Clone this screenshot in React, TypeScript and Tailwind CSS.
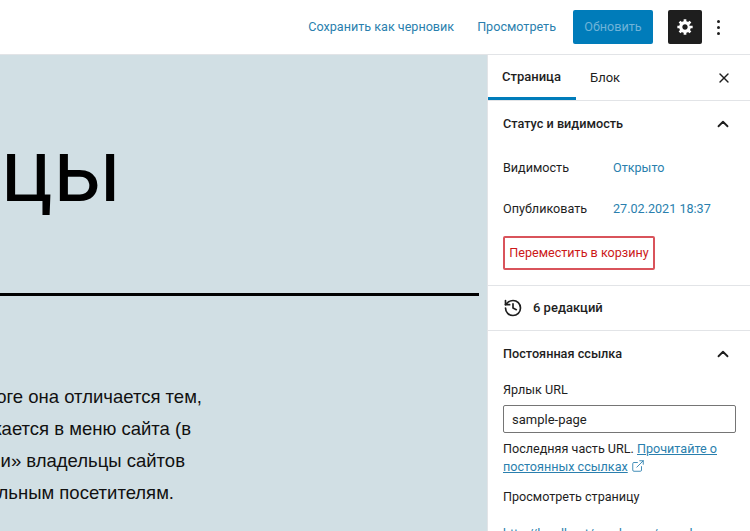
import { ChevronUp, ExternalLink, History, X } from 'lucide-react'

function SectionHeader({ title }: { title: string }) {
  return (
    <div className="flex items-center justify-between">
      <span className="text-[12.7px] leading-[18px] font-medium text-[#1e1e1e]">{title}</span>
      <ChevronUp size={18} strokeWidth={2.4} className="text-[#1e1e1e] mr-[3px]" />
    </div>
  )
}

export default function App() {
  return (
    <div className="w-[750px] h-[531px] overflow-hidden bg-white flex flex-col font-['Roboto','Liberation_Sans',sans-serif]">
      <header className="h-[55px] shrink-0 flex items-center justify-end border-b border-[#e2e4e7] pr-[30px]">
        <a className="text-[12.6px] text-[#2a7fae] mr-[23px]">Сохранить как черновик</a>
        <a className="text-[12.6px] text-[#2a7fae] mr-[17px]">Просмотреть</a>
        <button className="w-[80px] h-[34px] rounded-[2px] bg-[#007cba] text-[12.6px] text-[#6fb3d8] mr-[15px]">Обновить</button>
        <button className="w-[34px] h-[34px] rounded-[2px] bg-[#1e1e1e] flex items-center justify-center mr-[15px]">
          <svg width="18" height="18" viewBox="0 0 20 20" fill="#fff">
            <path d="M18 12h-2.18c-.17.7-.44 1.35-.81 1.93l1.54 1.54-2.1 2.1-1.54-1.54c-.58.36-1.23.63-1.91.79V19H8v-2.18c-.68-.16-1.33-.43-1.91-.79l-1.54 1.54-2.12-2.12 1.54-1.54c-.36-.58-.63-1.23-.79-1.91H1V9.03h2.17c.16-.7.44-1.35.8-1.94L2.43 5.55l2.1-2.1 1.54 1.54c.58-.37 1.24-.64 1.93-.81V2h3v2.18c.68.16 1.33.43 1.91.79l1.54-1.54 2.12 2.12-1.54 1.54c-.36.59-.64 1.24-.8 1.94H18V12zm-8.5 1.5c1.66 0 3-1.34 3-3s-1.34-3-3-3-3 1.34-3 3 1.34 3 3 3z" transform="translate(.5 -.5)" />
          </svg>
        </button>
        <span className="flex flex-col gap-[3px]">
          <span className="w-[3px] h-[3px] rounded-full bg-[#1e1e1e]" />
          <span className="w-[3px] h-[3px] rounded-full bg-[#1e1e1e]" />
          <span className="w-[3px] h-[3px] rounded-full bg-[#1e1e1e]" />
        </span>
      </header>

      <div className="flex flex-1 min-h-0">
        <main className="w-[487px] shrink-0 bg-[#d1dfe4] overflow-hidden font-['Liberation_Sans',sans-serif] text-black">
          {/* the page content is scrolled sideways, so lines are cut at the left edge */}
          <div className="w-[122px] h-[104px] mt-[64px] flex justify-end">
            <h1 className="whitespace-nowrap text-[89px] leading-[104px] font-['Roboto',sans-serif]">Заголовок страницы</h1>
          </div>
          <div className="w-[479px] h-[3px] bg-black mt-[70px]" />
          <div className="mt-[85px] text-[18.5px] leading-[32px] text-[#111]">
            <div className="w-[202px] flex justify-end"><p className="whitespace-nowrap">В отличие от записи в блоге она отличается тем,</p></div>
            <div className="w-[191px] flex justify-end"><p className="whitespace-nowrap">что она часто отображается в меню сайта (в</p></div>
            <div className="w-[185px] flex justify-end"><p className="whitespace-nowrap">Большинство темы и» владельцы сайтов</p></div>
            <div className="w-[174px] flex justify-end"><p className="whitespace-nowrap">представляется потенциальным посетителям.</p></div>
          </div>
        </main>

        <aside className="flex-1 min-w-0 border-l border-[#e2e4e7] overflow-hidden">
          <div className="h-[46px] flex border-b border-[#e2e4e7]">
            <div className="w-[88px] h-[45px] pl-[14px] pt-[1px] flex items-center border-b-[3px] border-[#007cba] text-[13px] font-medium text-[#1e1e1e]">Страница</div>
            <div className="ml-[14px] flex items-center text-[13px] text-[#1e1e1e]">Блок</div>
            <div className="ml-auto mr-[18px] flex items-center">
              <X size={16} strokeWidth={2} className="text-[#1e1e1e]" />
            </div>
          </div>

          <section className="h-[185px] border-b border-[#e2e4e7] px-[15px] pt-[14px]">
            <SectionHeader title="Статус и видимость" />
            <div className="flex mt-[26px] text-[12.6px] leading-[18px]">
              <span className="w-[110px] text-[#1e1e1e]">Видимость</span>
              <span className="text-[#2a7fae]">Открыто</span>
            </div>
            <div className="flex mt-[23px] text-[12.6px] leading-[18px]">
              <span className="w-[110px] text-[#1e1e1e]">Опубликовать</span>
              <span className="text-[#2a7fae]">27.02.2021 18:37</span>
            </div>
            <button className="mt-[18px] w-[152px] h-[34px] rounded-[2px] border-2 border-[#d9535b] text-[12.6px] text-[#cc1818] bg-white whitespace-nowrap">Переместить в корзину</button>
          </section>

          <div className="h-[45px] border-b border-[#e2e4e7] pl-[15px] flex items-center gap-[10px]">
            <History size={20} strokeWidth={2} className="text-[#1e1e1e]" />
            <span className="text-[13px] font-medium text-[#1e1e1e]">6 редакций</span>
          </div>

          <section className="px-[15px] pt-[14px]">
            <SectionHeader title="Постоянная ссылка" />
            <div className="mt-[18px] text-[12.6px] leading-[18px] text-[#1e1e1e]">Ярлык URL</div>
            <input readOnly value="sample-page" className="mt-[6px] block w-[233px] h-[28px] rounded-[2px] border border-[#757575] px-[8px] text-[13px] text-[#1e1e1e]" />
            <p className="mt-[7px] text-[12.6px] leading-[18px] text-[#1e1e1e]">
              Последняя часть URL.{' '}
              <a className="text-[#2a7fae] underline">Прочитайте о постоянных ссылках</a>
              <ExternalLink size={14} strokeWidth={1.5} className="inline ml-[3px] mb-[3px] text-[#2a7fae]" />
            </p>
            <div className="mt-[12px] text-[12.6px] leading-[18px] text-[#1e1e1e]">Просмотреть страницу</div>
            <a className="block mt-[19px] text-[12.6px] leading-[18px] text-[#2a7fae] underline whitespace-nowrap">http://localhost/wordpress/sample</a>
          </section>
        </aside>
      </div>
    </div>
  )
}
